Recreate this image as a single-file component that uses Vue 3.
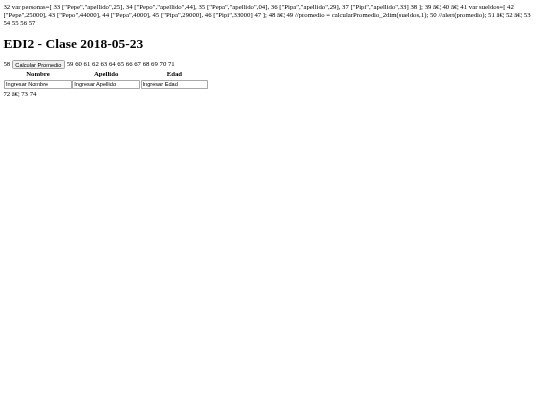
<script setup>
const columns = [
  { label: 'Nombre', placeholder: 'Ingresar Nombre' },
  { label: 'Apellido', placeholder: 'Ingresar Apellido' },
  { label: 'Edad', placeholder: 'Ingresar Edad' },
]
</script>

<template>
  <main class="page">
    32 var personas=[ 33 ["Pepe","apellido",25], 34 ["Pepo","apellido",44], 35 ["Pepa","apellido",04], 36 ["Pipa","apellido",29], 37 ["Pipi","apellido",33] 38 ]; 39 â€¦ 40 â€¦ 41 var sueldos=[ 42 ["Pepe",25000], 43 ["Pepo",44000], 44 ["Pepa",4000], 45 ["Pipa",29000], 46 ["Pipi",33000] 47 ]; 48 â€¦ 49 //promedio = calcularPromedio_2dim(sueldos,1); 50 //alert(promedio); 51 â€¦ 52 â€¦ 53 54 55 56 57
    <h1 class="title">EDI2 - Clase 2018-05-23</h1>
    58
    <button class="calc-btn" type="button">Calcular Promedio</button>
    59 60 61 62 63 64 65 66 67 68 69 70 71
    <table class="grid">
      <thead>
        <tr>
          <th v-for="col in columns" :key="col.label">{{ col.label }}</th>
        </tr>
      </thead>
      <tbody>
        <tr>
          <td v-for="col in columns" :key="col.label">
            <input class="field" type="text" :placeholder="col.placeholder" :value="col.placeholder" />
          </td>
        </tr>
      </tbody>
    </table>
    72 â€¦ 73 74
  </main>
</template>

<style scoped>
/* the page was captured at 1280px wide, so everything below is in those units */
.page {
  zoom: 0.421875;
  padding: 8px;
  font-family: "Liberation Serif", serif;
  font-size: 16px;
  line-height: 1.15;
  color: #000;
  filter: blur(0.2px);
}

.title {
  margin: 21.44px 0;
  font-size: 32px;
  font-weight: 700;
}

.calc-btn {
  padding: 1px 6px;
  font-family: "Liberation Sans", sans-serif;
  font-size: 13.33px;
  color: #000;
  background: #efefef;
  border: 2px solid #a3a3a3;
  border-radius: 3px;
}

.grid {
  margin: 2px 0 0 1px;
  border-spacing: 0;
}

.grid th {
  padding: 1px;
}

.grid td {
  padding: 3px 1px 4px;
}

.field {
  box-sizing: content-box;
  width: 151px;
  padding: 1px 2px;
  font-family: "Liberation Sans", sans-serif;
  font-size: 13.33px;
  color: #000;
  background: #fff;
  border: 2px solid #a9a9a9;
  border-radius: 2px;
}
</style>
